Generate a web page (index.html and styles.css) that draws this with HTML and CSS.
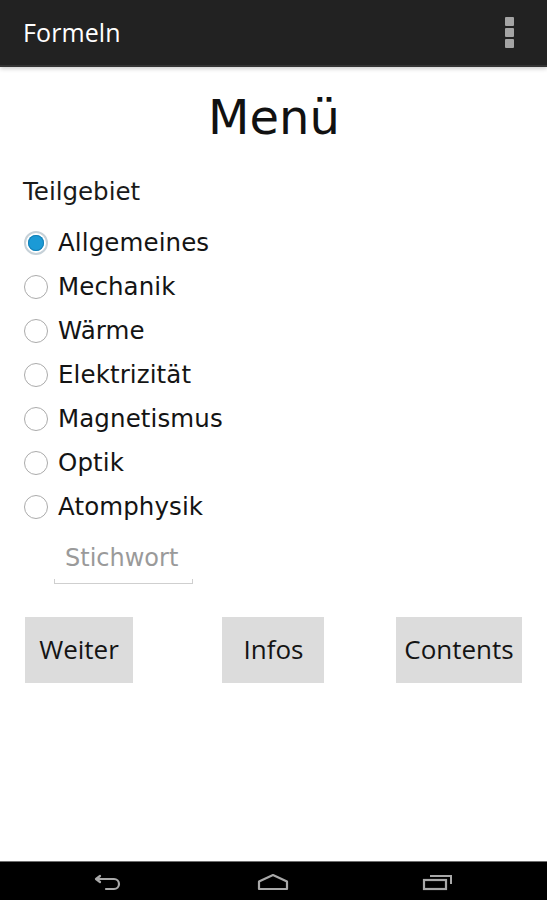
FILE: index.html
```html
<!DOCTYPE html>
<html lang="de">
<head>
<meta charset="utf-8">
<title>Formeln</title>
<link rel="stylesheet" href="styles.css">
</head>
<body>
<div class="screen">
  <header class="actionbar">
    <span class="title">Formeln</span>
    <span class="overflow"><i></i><i></i><i></i></span>
  </header>
  <main class="content">
    <h1 class="heading">Menü</h1>
    <div class="group-label">Teilgebiet</div>
    <ul class="radios">
      <li class="radio-row"><span class="radio checked"></span><span class="label">Allgemeines</span></li>
      <li class="radio-row"><span class="radio"></span><span class="label">Mechanik</span></li>
      <li class="radio-row"><span class="radio"></span><span class="label">Wärme</span></li>
      <li class="radio-row"><span class="radio"></span><span class="label">Elektrizität</span></li>
      <li class="radio-row"><span class="radio"></span><span class="label">Magnetismus</span></li>
      <li class="radio-row"><span class="radio"></span><span class="label">Optik</span></li>
      <li class="radio-row"><span class="radio"></span><span class="label">Atomphysik</span></li>
    </ul>
    <div class="edit">
      <span class="hint">Stichwort</span>
      <span class="edit-line"></span>
    </div>
    <div class="buttons">
      <span class="btn btn-left">Weiter</span>
      <span class="btn btn-center">Infos</span>
      <span class="btn btn-right">Contents</span>
    </div>
  </main>
  <nav class="navbar">
    <svg class="nav-icon" width="30" height="18" viewBox="0 0 30 18">
      <path d="M7 3 L3 6 L7 9 M3 6 H21 A5 5 0 0 1 21 16 H13" fill="none" stroke="#a9a9a9" stroke-width="2.2" stroke-linejoin="round" stroke-linecap="round"/>
    </svg>
    <svg class="nav-icon" width="32" height="18" viewBox="0 0 32 18">
      <path d="M2 16 V8.5 L16 2 L30 8.5 V16 Z" fill="none" stroke="#a9a9a9" stroke-width="2.2" stroke-linejoin="round"/>
    </svg>
    <svg class="nav-icon" width="32" height="18" viewBox="0 0 32 18">
      <rect x="2" y="7" width="22" height="9" fill="none" stroke="#a9a9a9" stroke-width="2.2"/>
      <path d="M8 3 H29 V11" fill="none" stroke="#a9a9a9" stroke-width="2"/>
    </svg>
  </nav>
</div>
</body>
</html>
```
FILE: styles.css
```css
* { box-sizing: border-box; }
html, body { margin: 0; padding: 0; background: #ffffff; }
body { font-family: "DejaVu Sans", sans-serif; color: #111; }

.screen {
  width: 547px;
  height: 900px;
  display: flex;
  flex-direction: column;
  overflow: hidden;
}

.actionbar {
  height: 67px;
  flex: 0 0 67px;
  background: #222222;
  border-bottom: 2px solid #343434;
  box-shadow: 0 2px 4px rgba(0,0,0,0.18);
  display: flex;
  align-items: center;
  justify-content: space-between;
  padding: 0 33px 0 23px;
  position: relative;
  z-index: 1;
}
.title {
  font-family: "Open Sans", sans-serif;
  font-size: 25px;
  font-weight: 500;
  color: #ffffff;
  margin-top: -1px;
  letter-spacing: 0.1px;
}
.overflow {
  display: flex;
  flex-direction: column;
  gap: 2px;
}
.overflow i {
  display: block;
  width: 9px;
  height: 9px;
  background: #a4a4a4;
  border-radius: 1px;
}

.content {
  flex: 1;
  padding: 0 23px;
  display: flex;
  flex-direction: column;
}

.heading {
  margin: 22px 0 0 0;
  text-align: center;
  font-weight: normal;
  font-size: 48px;
  line-height: 56px;
  color: #111;
  padding-left: 1px;
}

.group-label {
  margin-top: 33px;
  font-size: 24.5px;
  line-height: 28px;
  color: #1a1a1a;
}

.radios {
  list-style: none;
  margin: 15px 0 0 0;
  padding: 0;
}
.radio-row {
  height: 44px;
  display: flex;
  align-items: center;
}
.radio {
  width: 24px;
  height: 24px;
  border-radius: 50%;
  border: 1.5px solid #ababab;
  margin-left: 1px;
  margin-right: 10px;
  flex: 0 0 24px;
  display: flex;
  align-items: center;
  justify-content: center;
}
.radio.checked {
  border: 2px solid #c6d1d8;
}
.radio.checked::after {
  content: "";
  width: 16px;
  height: 16px;
  border-radius: 50%;
  background: #1b9ad6;
  box-shadow: inset 0 0 0 1px #1580b6;
}
.label {
  font-size: 24.5px;
  line-height: 44px;
  color: #141414;
  letter-spacing: 0.1px;
}

.edit {
  margin: 14px 0 0 31px;
  width: 139px;
  display: flex;
  flex-direction: column;
}
.hint {
  font-size: 24px;
  line-height: 30px;
  color: #9a9a9a;
  padding-left: 11px;
}
.edit-line {
  display: block;
  height: 5px;
  margin-top: 6px;
  border-left: 1px solid #cfcfcf;
  border-right: 1px solid #cfcfcf;
  border-bottom: 1.5px solid #cfcfcf;
}

.buttons {
  margin-top: 33px;
  margin-left: 2px;
  margin-right: 2px;
  display: grid;
  grid-template-columns: 1fr 1fr 1fr;
  align-items: center;
}
.btn {
  height: 66px;
  background: #dcdcdc;
  display: flex;
  align-items: center;
  justify-content: center;
  font-family: "Open Sans", sans-serif;
  font-size: 26px;
  color: #141414;
  padding: 0 0 2px 0;
}
.btn-left { justify-self: start; width: 108px; }
.btn-center { justify-self: center; width: 102px; }
.btn-right { justify-self: end; width: 126px; }

.navbar {
  flex: 0 0 39px;
  height: 39px;
  background: #000000;
  border-top: 1px solid #6e6e6e;
  display: flex;
  align-items: center;
  justify-content: space-between;
  padding: 0 93px 0 93px;
}
.nav-icon { display: block; margin-top: 2px; }
```
